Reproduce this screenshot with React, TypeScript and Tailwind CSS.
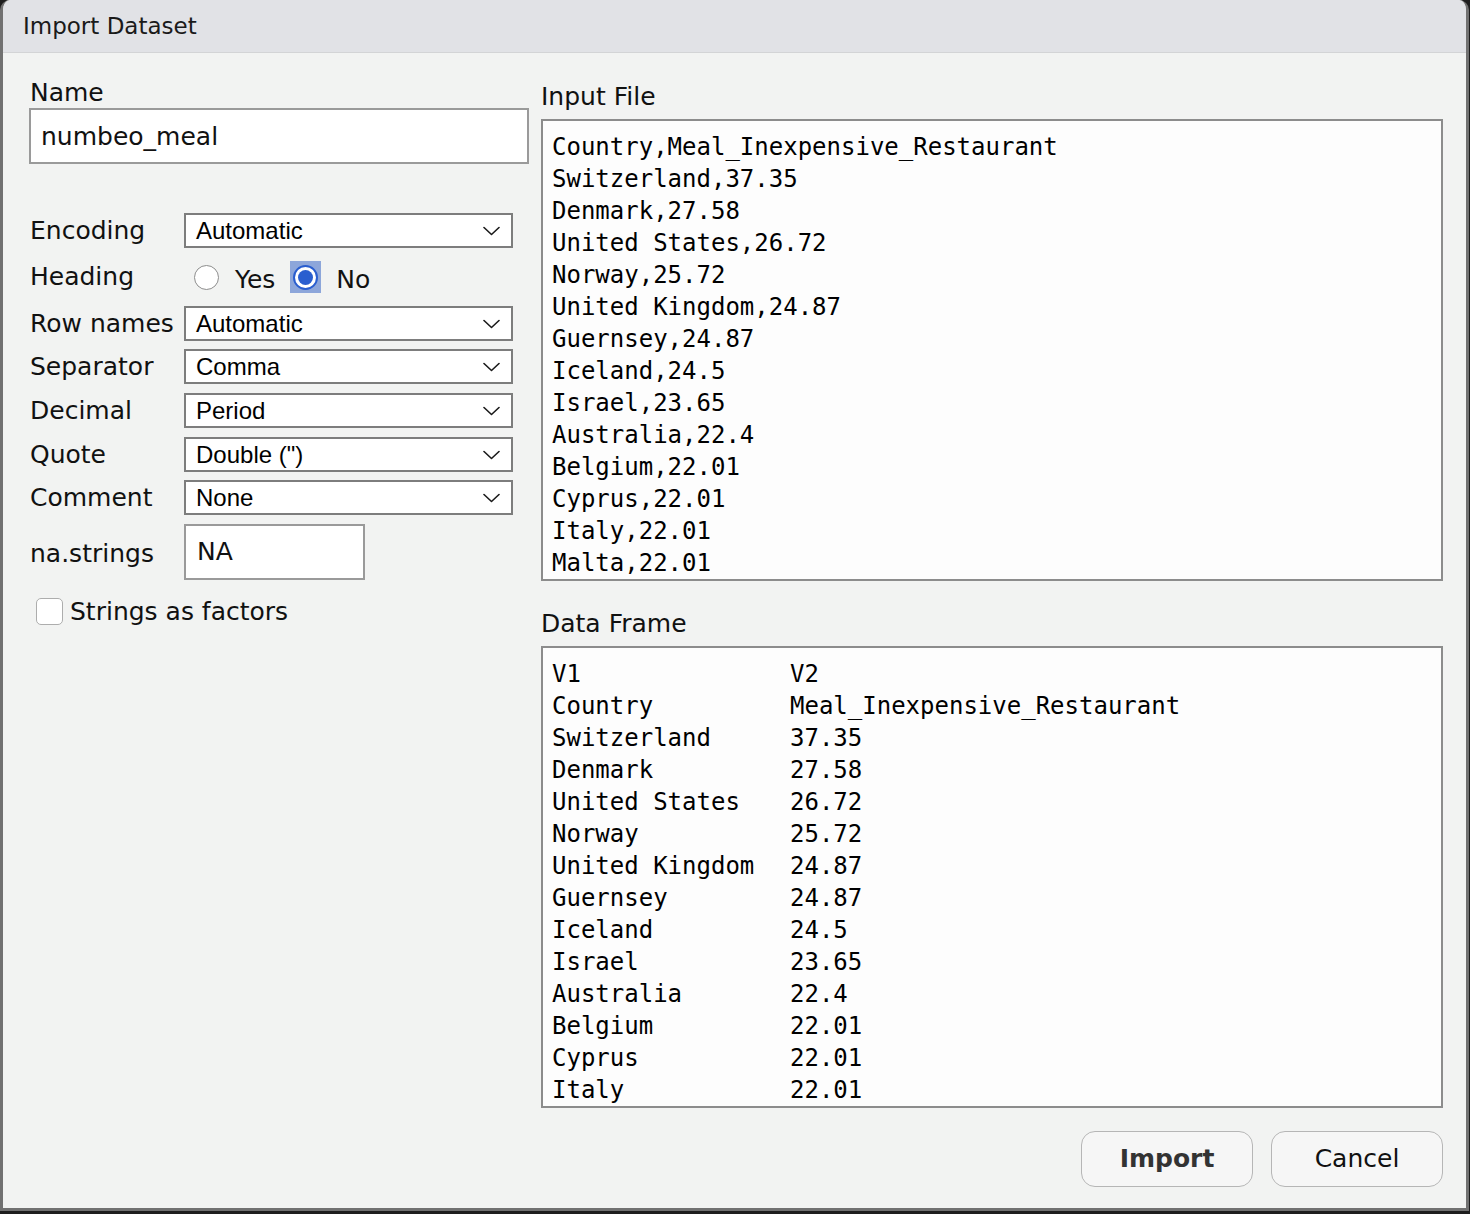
import React from "react";

const inputLines = [
  "Country,Meal_Inexpensive_Restaurant",
  "Switzerland,37.35",
  "Denmark,27.58",
  "United States,26.72",
  "Norway,25.72",
  "United Kingdom,24.87",
  "Guernsey,24.87",
  "Iceland,24.5",
  "Israel,23.65",
  "Australia,22.4",
  "Belgium,22.01",
  "Cyprus,22.01",
  "Italy,22.01",
  "Malta,22.01",
];

const frameRows: [string, string][] = [
  ["V1", "V2"],
  ["Country", "Meal_Inexpensive_Restaurant"],
  ["Switzerland", "37.35"],
  ["Denmark", "27.58"],
  ["United States", "26.72"],
  ["Norway", "25.72"],
  ["United Kingdom", "24.87"],
  ["Guernsey", "24.87"],
  ["Iceland", "24.5"],
  ["Israel", "23.65"],
  ["Australia", "22.4"],
  ["Belgium", "22.01"],
  ["Cyprus", "22.01"],
  ["Italy", "22.01"],
];

function Chevron() {
  return (
    <svg width="17" height="10" viewBox="0 0 17 10" fill="none">
      <polyline points="1,1.5 8.5,8.5 16,1.5" stroke="#1a1a1a" strokeWidth="1.6" strokeLinecap="round" strokeLinejoin="round" />
    </svg>
  );
}

function Select({ value }: { value: string }) {
  return (
    <div className="w-[329px] h-[35px] border-2 border-[#7d7d7d] bg-white flex items-center justify-between pl-[10px] pr-[11px] font-['Liberation_Sans',Arial,sans-serif] text-[24px] text-black leading-none">
      <span>{value}</span>
      <Chevron />
    </div>
  );
}

function Row({ label, value, className = "" }: { label: string; value: string; className?: string }) {
  return (
    <div className={`flex items-center h-[35px] ${className}`}>
      <div className="w-[154px] text-[25px] leading-[30px]">{label}</div>
      <Select value={value} />
    </div>
  );
}

export default function App() {
  return (
    <div className="w-[1470px] h-[1214px] bg-[#1e1e1e] overflow-hidden">
      <div className="w-[1469px] h-[1211px] bg-[#f2f3f2] border-x-[3px] border-b-[3px] border-[#717171] rounded-t-[10px] overflow-hidden flex flex-col font-['DejaVu_Sans',sans-serif] text-[#111]">
        {/* Title bar */}
        <div className="h-[53px] shrink-0 bg-[#e1e2e6] border-b border-[#d3d4d6] flex items-center pl-[20px]">
          <span className="text-[23px] text-[#1a1a1a] mt-[1px]">Import Dataset</span>
        </div>

        {/* Body */}
        <div className="flex flex-1 pl-[26px] pr-[23px] gap-[12px]">
          {/* Left column */}
          <div className="w-[500px] flex flex-col">
            <div className="mt-[25px] h-[30px] leading-[30px] text-[25px] pl-[1px]">Name</div>
            <div className="h-[56px] border-2 border-[#9a9a9a] bg-white flex items-center px-[10px] text-[25px]">
              <span className="mt-[2px]">numbeo_meal</span>
            </div>

            <div className="pl-[1px]">
              <Row label="Encoding" value="Automatic" className="mt-[49px]" />

              <div className="flex items-center h-[58px]">
                <div className="w-[154px] text-[25px] leading-[30px]">Heading</div>
                <div className="ml-[10px] w-[25px] h-[25px] rounded-full border-[1.5px] border-[#8d8d8d] bg-white" />
                <span className="ml-[16px] text-[25px] leading-[30px] mt-[6px]">Yes</span>
                <div className="ml-[15px] w-[31px] h-[32px] bg-[#8da6da] flex items-center justify-center">
                  <div className="w-[25px] h-[25px] rounded-full border-2 border-[#2a5ecf] bg-white flex items-center justify-center">
                    <div className="w-[15px] h-[15px] rounded-full bg-[#2a5ecf]" />
                  </div>
                </div>
                <span className="ml-[15px] text-[25px] leading-[30px] mt-[6px]">No</span>
              </div>

              <Row label="Row names" value="Automatic" />
              <Row label="Separator" value="Comma" className="mt-[8px]" />
              <Row label="Decimal" value="Period" className="mt-[9px]" />
              <Row label="Quote" value={'Double (")'} className="mt-[9px]" />
              <Row label="Comment" value="None" className="mt-[8px]" />

              <div className="flex items-center h-[56px] mt-[9px]">
                <div className="w-[154px] text-[25px] leading-[30px] mt-[3px]">na.strings</div>
                <div className="w-[181px] h-[56px] border-2 border-[#9a9a9a] bg-white flex items-center pl-[11px] text-[25px]">
                  NA
                </div>
              </div>
            </div>

            <div className="flex items-center h-[28px] mt-[17px]">
              <div className="ml-[7px] w-[27px] h-[27px] rounded-[5px] border-[1.5px] border-[#adadad] bg-white" />
              <span className="ml-[7px] text-[25px] leading-[30px] mt-[2px]">Strings as factors</span>
            </div>
          </div>

          {/* Right column */}
          <div className="w-[902px] flex flex-col">
            <div className="mt-[29px] h-[30px] leading-[30px] text-[25px]">Input File</div>
            <div className="mt-[7px] h-[462px] border-2 border-[#8c8c8c] bg-[#fdfdfd] overflow-hidden pt-[10px] pl-[9px] font-['DejaVu_Sans_Mono',monospace] text-[24px] leading-[32px] text-black whitespace-pre">
              {inputLines.map((l, i) => (
                <div key={i}>{l}</div>
              ))}
            </div>

            <div className="mt-[28px] h-[30px] leading-[30px] text-[25px]">Data Frame</div>
            <div className="mt-[7px] h-[462px] border-2 border-[#8c8c8c] bg-[#fdfdfd] overflow-hidden pt-[10px] pl-[9px] font-['DejaVu_Sans_Mono',monospace] text-[24px] leading-[32px] text-black whitespace-pre">
              {frameRows.map(([a, b], i) => (
                <div key={i} className="flex">
                  <span className="w-[238px] shrink-0">{a}</span>
                  <span>{b}</span>
                </div>
              ))}
            </div>

            <div className="mt-[23px] flex justify-end gap-[18px]">
              <button className="w-[172px] h-[56px] rounded-[14px] border-[1.5px] border-[#b6b6b6] bg-[#f6f6f6] text-[25px] font-bold text-[#333]">
                Import
              </button>
              <button className="w-[172px] h-[56px] rounded-[14px] border-[1.5px] border-[#b6b6b6] bg-[#f6f6f6] text-[25px] text-[#111]">
                Cancel
              </button>
            </div>
          </div>
        </div>
      </div>
    </div>
  );
}
